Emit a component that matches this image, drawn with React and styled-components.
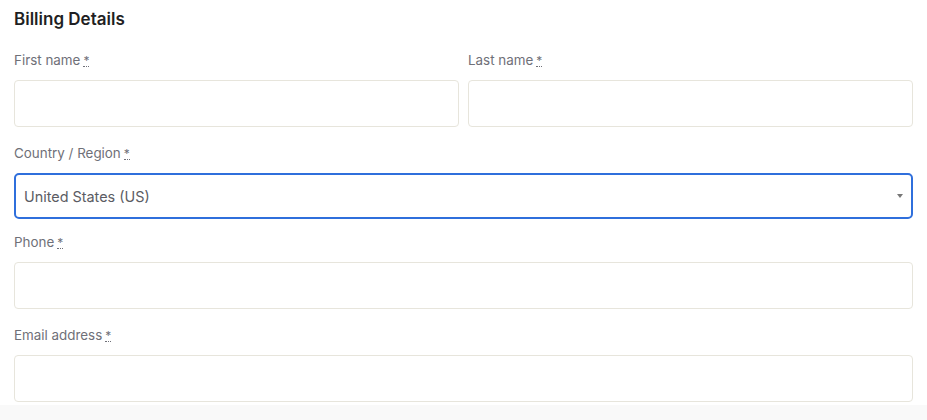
import React from 'react'
import styled, { createGlobalStyle } from 'styled-components'

const GlobalStyle = createGlobalStyle`
  body {
    margin: 0;
    background: #f9f9f9;
    font-family: 'Inter', 'Noto Sans', sans-serif;
  }
`

const Form = styled.form`
  background: #fff;
  height: 405px;
  box-sizing: border-box;
  padding: 9px 14px 0 14px;
`

const Heading = styled.h3`
  margin: 0 0 21px 0;
  font-size: 17px;
  line-height: 20px;
  font-weight: 600;
  color: #1f1f23;
`

const Row = styled.div`
  display: flex;
  gap: 9px;
`

const Field = styled.div`
  flex: 1;
  display: flex;
  flex-direction: column;
  margin-bottom: ${p => p.$mb || 16}px;
`

const Label = styled.label`
  font-size: 13.4px;
  line-height: 20px;
  color: #6f7078;
  margin-bottom: 10px;
`

const Req = styled.abbr`
  margin-left: 3px;
  text-decoration: none;
  border-bottom: 1px dotted #6f7078;
  line-height: 10px;
  display: inline-block;
  font-size: 12px;
`

const Input = styled.input`
  height: 47px;
  box-sizing: border-box;
  border: 1px solid #e7e5dc;
  border-radius: 4px;
  background: #fff;
  outline: none;
`

const Select = styled.div`
  height: 46px;
  box-sizing: border-box;
  border: 2px solid #2f6fdc;
  border-radius: 5px;
  display: flex;
  align-items: center;
  justify-content: space-between;
  padding: 0 8px 0 8px;
  font-size: 14.4px;
  color: #5b5c63;
`

const Caret = styled.span`
  width: 0;
  height: 0;
  border-left: 3.5px solid transparent;
  border-right: 3.5px solid transparent;
  border-top: 4px solid #777;
`

const Required = () => <Req title="required">*</Req>

export default function App() {
  return (
    <>
      <GlobalStyle />
      <Form>
        <Heading>Billing Details</Heading>
        <Row>
          <Field>
            <Label>First name<Required /></Label>
            <Input />
          </Field>
          <Field>
            <Label>Last name<Required /></Label>
            <Input />
          </Field>
        </Row>
        <Field $mb={13}>
          <Label>Country / Region<Required /></Label>
          <Select>
            United States (US)
            <Caret />
          </Select>
        </Field>
        <Field>
          <Label>Phone<Required /></Label>
          <Input />
        </Field>
        <Field>
          <Label>Email address<Required /></Label>
          <Input />
        </Field>
      </Form>
    </>
  )
}
